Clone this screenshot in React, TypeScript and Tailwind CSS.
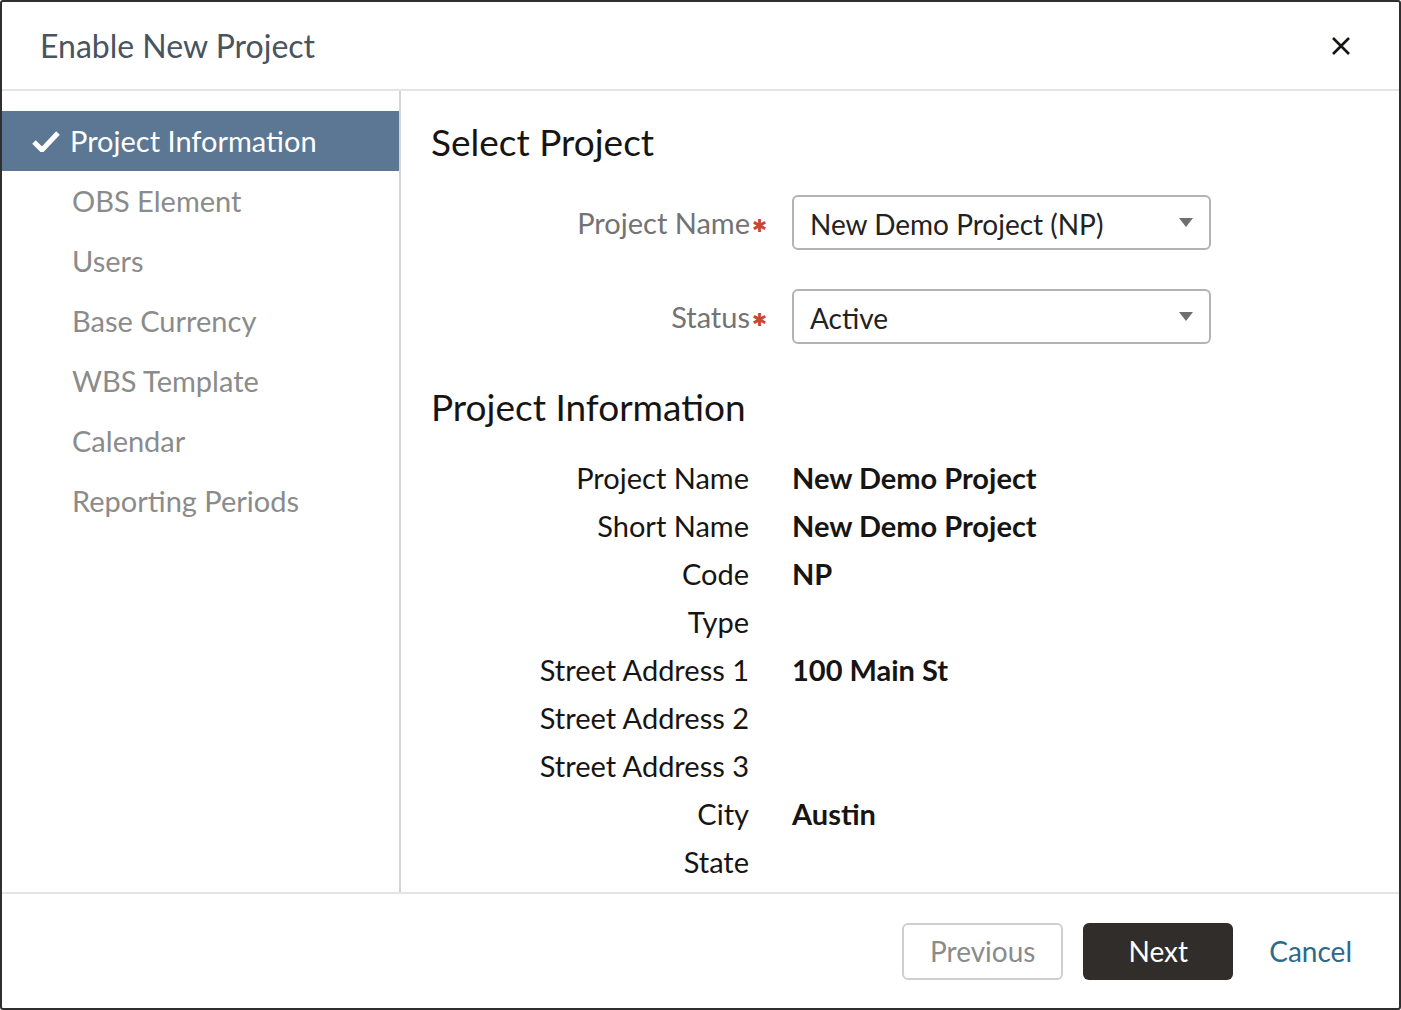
import React from 'react';

const steps = ['Project Information', 'OBS Element', 'Users', 'Base Currency', 'WBS Template', 'Calendar', 'Reporting Periods'];

const details: Array<{ label: string; value: string }> = [
  { label: 'Project Name', value: 'New Demo Project' },
  { label: 'Short Name', value: 'New Demo Project' },
  { label: 'Code', value: 'NP' },
  { label: 'Type', value: '' },
  { label: 'Street Address 1', value: '100 Main St' },
  { label: 'Street Address 2', value: '' },
  { label: 'Street Address 3', value: '' },
  { label: 'City', value: 'Austin' },
  { label: 'State', value: '' },
];

const SelectField = ({ label, value }: { label: string; value: string }) => (
  <div className="flex items-center">
    <div className="w-[336px] text-right text-[29px] text-[#737373] flex items-center justify-end">
      {label}
      <span className="ml-[2px] mt-[6px] text-[#c74634] text-[18px]">✱</span>
    </div>
    <div className="ml-[25px] w-[419px] h-[55px] border-2 border-[#b3b3b3] rounded-md flex items-center justify-between pl-4 pr-4">
      <span className="text-[28px] text-[#222] mt-[3px]">{value}</span>
      <svg width="14" height="9" viewBox="0 0 14 9">
        <path d="M0 0h14L7 9z" fill="#6f6f6f" />
      </svg>
    </div>
  </div>
);

export default function App() {
  return (
    <div
      className="h-screen w-full flex flex-col bg-white border-2 border-[#2f2f2f] rounded-[3px] overflow-hidden"
      style={{ fontFamily: 'Lato, "Open Sans", sans-serif' }}
    >
      <header className="h-[89px] shrink-0 flex items-center justify-between pl-[38px] pr-[48px] border-b-2 border-[#e4e4e4]">
        <h1 className="text-[32px] text-[#4a5360]">Enable New Project</h1>
        <svg width="20" height="20" viewBox="0 0 20 20">
          <path d="M2 2L18 18M18 2L2 18" stroke="#161513" strokeWidth="2.6" />
        </svg>
      </header>

      <div className="flex-1 flex overflow-hidden">
        <nav className="w-[399px] shrink-0 border-r-2 border-[#d4d4d4] pt-5">
          {steps.map((s, i) => (
            <div
              key={s}
              className={
                i === 0
                  ? 'h-[60px] flex items-center bg-[#5b7793] text-white text-[29px] pl-[30px]'
                  : 'h-[60px] flex items-center text-[#8b8b8b] text-[29px] pl-[70px]'
              }
            >
              {i === 0 && (
                <svg width="28" height="22" viewBox="0 0 28 22" className="mr-[10px]">
                  <path d="M2 12l8 8L26 3" stroke="#fff" strokeWidth="5" fill="none" />
                </svg>
              )}
              {s}
            </div>
          ))}
        </nav>

        <main className="flex-1 overflow-hidden pl-[30px] pt-[29px]">
          <h2 className="text-[37px] text-[#161513] leading-[44px]">Select Project</h2>
          <div className="mt-[31px] flex flex-col gap-[39px]">
            <SelectField label="Project Name" value="New Demo Project (NP)" />
            <SelectField label="Status" value="Active" />
          </div>
          <h2 className="mt-[41px] text-[37px] text-[#161513] leading-[44px]">Project Information</h2>
          <div className="mt-[25px] flex flex-col">
            {details.map((d) => (
              <div key={d.label} className="h-[48px] flex items-center">
                <div className="w-[318px] text-right text-[29px] text-[#161513]">{d.label}</div>
                <div className="ml-[43px] text-[29px] font-bold text-[#161513]">{d.value}</div>
              </div>
            ))}
          </div>
        </main>
      </div>

      <footer className="h-[116px] shrink-0 border-t-2 border-[#e4e4e4] flex items-center justify-end pr-[47px]">
        <button className="w-[161px] h-[57px] border-2 border-[#cfcfcf] rounded-md text-[28px] text-[#8b8b8b]">
          Previous
        </button>
        <button className="ml-5 w-[150px] h-[57px] bg-[#312d2a] rounded-md text-[28px] text-white">Next</button>
        <button className="ml-9 text-[28px] text-[#2b6a8a]">Cancel</button>
      </footer>
    </div>
  );
}
